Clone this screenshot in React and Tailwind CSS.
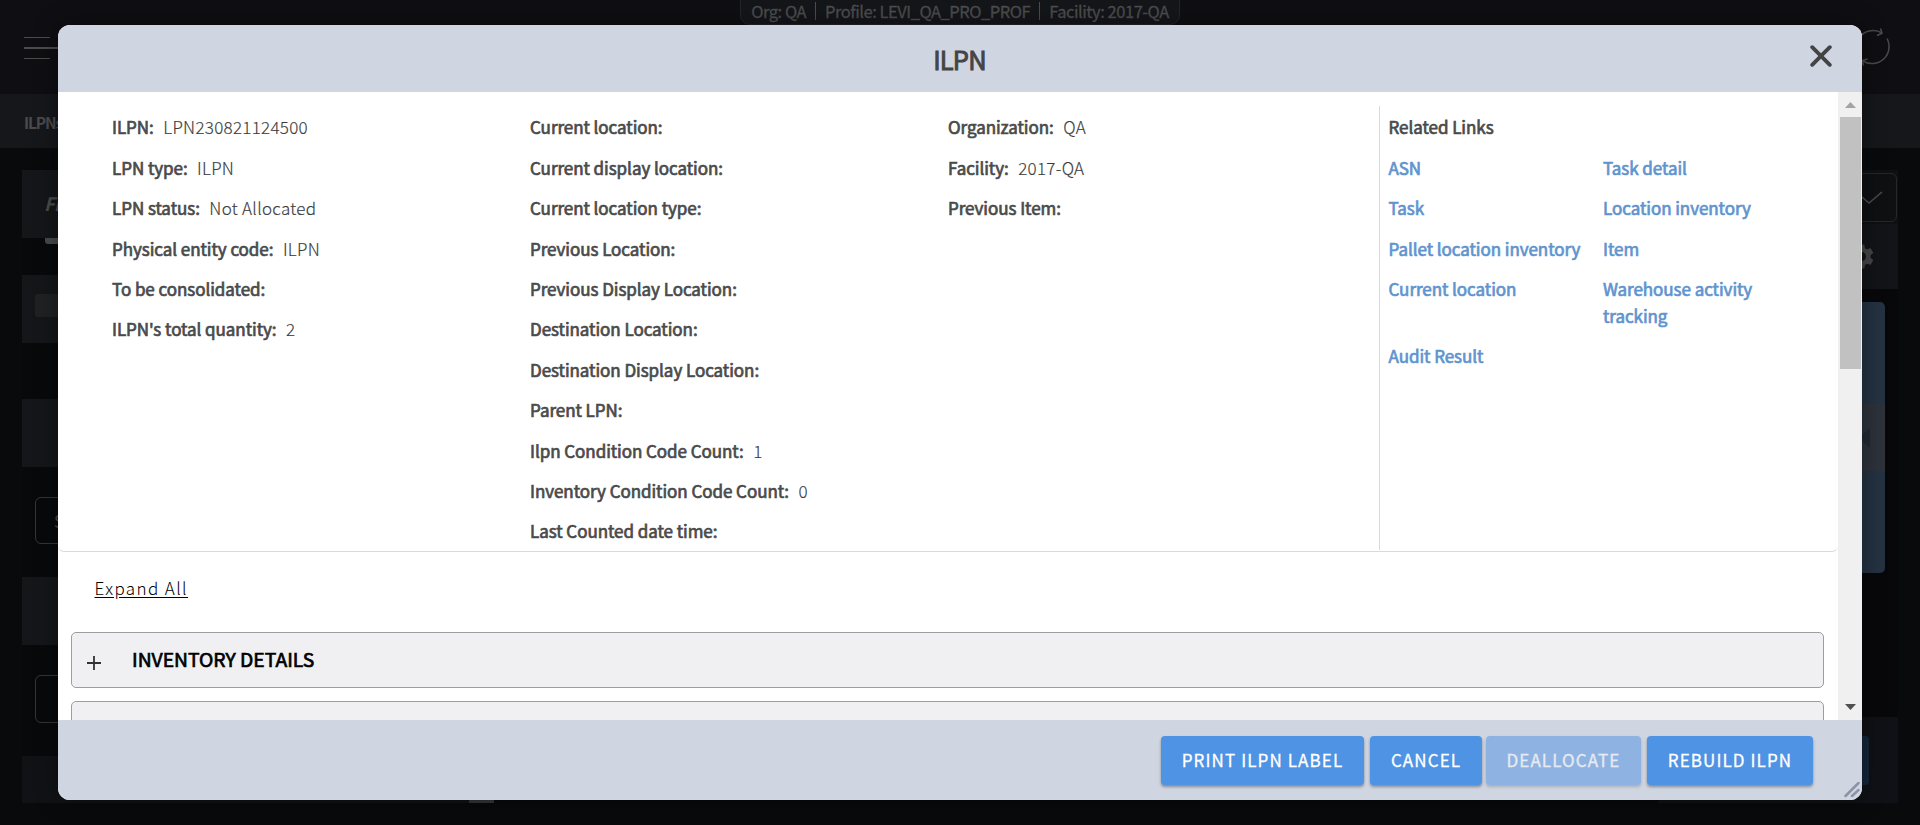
const details = [
  [
    ["ILPN:", "LPN230821124500"],
    ["LPN type:", "ILPN"],
    ["LPN status:", "Not Allocated"],
    ["Physical entity code:", "ILPN"],
    ["To be consolidated:", ""],
    ["ILPN's total quantity:", "2"],
  ],
  [
    ["Current location:", ""],
    ["Current display location:", ""],
    ["Current location type:", ""],
    ["Previous Location:", ""],
    ["Previous Display Location:", ""],
    ["Destination Location:", ""],
    ["Destination Display Location:", ""],
    ["Parent LPN:", ""],
    ["Ilpn Condition Code Count:", "1"],
    ["Inventory Condition Code Count:", "0"],
    ["Last Counted date time:", ""],
  ],
  [
    ["Organization:", "QA"],
    ["Facility:", "2017-QA"],
    ["Previous Item:", ""],
  ],
];

const links = [
  "ASN", "Task detail",
  "Task", "Location inventory",
  "Pallet location inventory", "Item",
  "Current location", "Warehouse activity tracking",
  "Audit Result",
];

const heavy = "[-webkit-text-stroke:0.7px_currentColor]";

function Field({ label, value }) {
  return (
    <div className="mb-[13.4px] flex h-[27px] items-center whitespace-nowrap leading-[27px]">
      <span className={`tracking-[-0.050px] ${heavy}`}>{label}</span>
      {value && <span className="ml-[9.500px] font-light tracking-[0.280px] text-[#3c3c3c] [-webkit-text-stroke:0.150px_currentColor]">{value}</span>}
    </div>
  );
}

function ActionButton({ children, className }) {
  return (
    <button className={`h-[49px] rounded-[4px] bg-[#4f93e4] pb-px text-center text-[17px] tracking-[1.1px] whitespace-nowrap text-white [-webkit-text-stroke:0.3px_currentColor] shadow-[0_2px_3px_rgba(0,0,0,0.35)] ${className}`}>
      {children}
    </button>
  );
}

function Backdrop() {
  return (
    <div className="flex h-full flex-col">
      <header className="flex h-[94px] shrink-0 justify-between bg-[#0f0e12]">
        <div className="w-[240px] pt-[37px] pl-6">
          <div className="h-px w-[26px] bg-[#4b4b4c]" />
          <div className="mt-[9px] h-[2px] w-[40px] bg-[#4b4b4c]" />
          <div className="mt-[9px] h-px w-[26px] bg-[#4b4b4c]" />
        </div>
        <div className="mt-[-6px] flex h-[31px] w-[440px] items-center justify-center rounded-b-[10px] border border-[#25262a] bg-[#15161a] pt-[3px] text-[16.500px] tracking-[-0.470px] whitespace-nowrap text-[#4c4d4e] [-webkit-text-stroke:0.3px_currentColor]">
          <span>Org: QA</span>
          <span className="mx-[9px] h-[18px] w-px bg-[#4c4d4e]" />
          <span>Profile: LEVI_QA_PRO_PROF</span>
          <span className="mx-[9px] h-[18px] w-px bg-[#4c4d4e]" />
          <span>Facility: 2017-QA</span>
        </div>
        <div className="flex w-[240px] justify-end pt-[27px] pr-[26px]">
          <svg width="40" height="40" viewBox="0 0 40 40" fill="none" stroke="#4b4b4c" strokeWidth="1.5">
            <path d="M4.5 12A17 17 0 0 1 28 6" />
            <path d="M26.5 1.5 28 6.3 23 8.5" />
            <path d="M33 11.500A17 17 0 0 1 9 34" />
            <path d="M9.500 38.500 8.500 33.500 13.500 32" />
          </svg>
        </div>
      </header>
      <div className="flex h-[54px] shrink-0 items-center bg-[#16171b] pt-[3px] pl-6 text-[15.500px] font-bold tracking-[-1.150px] text-[#4b4b4c]">ILPNs</div>
      <main className="mx-[22px] mt-[22px] flex h-[633px] shrink-0 justify-between bg-[#08090b]">
        <section className="flex w-[472px] flex-col">
          <div className="flex h-[68px] shrink-0 items-center bg-[#141619] pl-[22px] text-[18.500px] font-bold tracking-[-0.900px] text-[#4b4b4c] italic">Filters</div>
          <div className="ml-[23px] h-[6px] w-[60px] shrink-0 rounded-b-[3px] bg-[#48494a]" />
          <div className="mt-[31px] h-[68px] shrink-0 bg-[#141619] pt-[19px] pl-[13px]">
            <div className="h-[23px] w-[60px] rounded-[3px] bg-[#202123]" />
          </div>
          <div className="mt-[56px] h-[68px] shrink-0 bg-[#141619]" />
          <div className="mt-[30px] ml-[13px] flex h-[47px] w-[200px] shrink-0 items-center rounded-[6px] border border-[#343536] pl-[18px] text-[17px] text-[#4b4b4c]">Search</div>
          <div className="mt-[33px] h-[68px] shrink-0 bg-[#141619]" />
          <div className="mt-[30px] ml-[13px] h-[48px] w-[200px] shrink-0 rounded-[6px] border border-[#343536]" />
          <div className="mt-[33px] flex h-[47px] shrink-0 items-end justify-end bg-[#111215]">
            <div className="h-[5px] w-[25px] bg-[#363637]" />
          </div>
        </section>
        <section className="flex w-[240px] flex-col bg-[#08080a]">
          <div className="h-[54px] shrink-0 bg-[#0f1012] pt-[3px] pr-px">
            <div className="flex h-[49px] items-center justify-end rounded-[6px] border border-[#25272a] pr-[13px]">
              <svg width="30" height="16" viewBox="0 0 30 16" fill="none" stroke="#4b4b4c" strokeWidth="1.500">
                <path d="M3 2l13 11L29 2" />
              </svg>
            </div>
          </div>
          <div className="flex h-[65px] shrink-0 items-center justify-end bg-[#131418] pr-[24px]">
            <svg width="25" height="25" viewBox="2 2 20 20" fill="#454546">
              <path d="M19.140 12.940c.040-.300.060-.610.060-.940s-.020-.640-.070-.940l2.030-1.580a.490.490 0 0 0 .120-.610l-1.920-3.320a.490.490 0 0 0-.590-.220l-2.390.960a7 7 0 0 0-1.620-.940l-.360-2.540A.480.480 0 0 0 13.920 2.400h-3.840a.480.480 0 0 0-.480.410l-.360 2.540a7.400 7.400 0 0 0-1.620.940l-2.390-.960a.490.490 0 0 0-.590.220L2.740 8.870a.480.480 0 0 0 .120.610l2.030 1.580a6 6 0 0 0 0 1.880l-2.030 1.580a.490.490 0 0 0-.120.610l1.920 3.320c.120.220.370.290.590.220l2.390-.960c.500.380 1.030.700 1.620.940l.360 2.540c.050.240.240.410.480.410h3.840c.240 0 .440-.170.470-.410l.360-2.540a7 7 0 0 0 1.620-.940l2.390.960c.220.080.470 0 .590-.220l1.920-3.320a.480.480 0 0 0-.120-.610zM12 15.600A3.600 3.600 0 1 1 12 8.400a3.600 3.600 0 0 1 0 7.200z" />
            </svg>
          </div>
          <div className="mt-[13px] mr-[13px] h-[271px] shrink-0 overflow-hidden rounded-[5px] bg-[#253242] pt-[102px]">
            <div className="flex h-[67px] items-center justify-end bg-[#2d323b] pr-[15px]">
              <svg width="11" height="20" viewBox="0 0 11 20" fill="#222933">
                <path d="M11 0v20L0 10z" />
              </svg>
            </div>
          </div>
          <div className="mt-auto flex h-[86px] items-start justify-end bg-[#101116] pt-[19px] pr-[29px]">
            <div className="h-[49px] w-[150px] rounded-[4px] bg-[#14253a]" />
          </div>
        </section>
      </main>
    </div>
  );
}

function Dialog() {
  return (
    <div className="absolute top-[25px] left-[58px] flex h-[775px] w-[1804px] flex-col overflow-hidden rounded-[12px] bg-white text-[#4a4a4a] shadow-[0_0_24px_rgba(0,0,0,0.4)]">
      <header className="grid h-[67px] shrink-0 grid-cols-3 items-center bg-[#cfd5e1]">
        <h1 className="col-start-2 pt-px pr-px text-center text-[25.5px] leading-[30px] tracking-[-0.800px] text-[#444] [-webkit-text-stroke:0.9px_currentColor]">ILPN</h1>
        <svg className="mr-[30px] mb-[5px] justify-self-end" width="22" height="22" viewBox="0 0 22 22" stroke="#444" strokeWidth="3.800" strokeLinecap="round">
          <path d="M2.200 2.200l17.600 17.600M19.800 2.200L2.200 19.800" />
        </svg>
      </header>

      <div className="flex h-[628px] shrink-0">
        <div className="flex min-w-0 flex-1 flex-col overflow-hidden">
          <div className="flex h-[460px] shrink-0 overflow-hidden rounded-b-[6px] border-b border-[#d9dadc] pt-[14px] pl-[54px] text-[17px]">
            {details.map((column, i) => (
              <div key={i} className="w-[418px] pt-[7.400px]">
                {column.map(([label, value]) => (
                  <Field key={label} label={label} value={value} />
                ))}
              </div>
            ))}
            <div className="ml-[13px] h-[444px] w-[440px] border-l border-[#d9dadc] pt-[7.400px] pl-[8.500px] tracking-[-0.050px]">
              <div className={`mb-[13.400px] leading-[27px] ${heavy}`}>Related Links</div>
              <div className={`grid grid-cols-[214.500px_170px] gap-y-[13.400px] leading-[27px] text-[#5f94cf] ${heavy}`}>
                {links.map((link) => (
                  <a key={link} href="#">{link}</a>
                ))}
              </div>
            </div>
          </div>
          <div className="h-[54px] shrink-0 pt-[22px] pl-[36.500px] leading-[27px]">
            <a href="#" className="text-[17px] font-light tracking-[1.400px] text-black underline underline-offset-2">Expand All</a>
          </div>
          <div className="mt-[26px] mr-[14px] ml-[13px] flex h-[56px] shrink-0 items-center rounded-[5px] border border-[#9c9da0] bg-[#f0f0f3] pl-[15px]">
            <svg className="mt-[5px]" width="14" height="14" viewBox="0 0 14 14" stroke="#333" strokeWidth="1.800">
              <path d="M7 0v14M0 7h14" />
            </svg>
            <span className={`mb-[2px] ml-[31px] text-[19.300px] leading-[28px] text-black ${heavy}`}>INVENTORY DETAILS</span>
          </div>
          <div className="mt-[13px] mr-[14px] ml-[13px] h-[56px] shrink-0 rounded-[5px] border border-[#9c9da0] bg-[#f0f0f3]" />
        </div>
        <div className="flex w-[24px] flex-col bg-[#f0f0f0] pt-[10px] pr-px pb-[10px] pl-[2px]">
          <svg className="self-center" width="11" height="6" viewBox="0 0 11 6" fill="#a3a3a3">
            <path d="M5.500 0L11 6H0z" />
          </svg>
          <div className="mt-[9px] h-[252px] bg-[#c1c1c1]" />
          <svg className="mt-auto self-center" width="11" height="6" viewBox="0 0 11 6" fill="#505050">
            <path d="M5.500 6L11 0H0z" />
          </svg>
        </div>
      </div>

      <footer className="flex h-[80px] justify-end bg-[#cfd5e1] pt-[16px] pr-[49px]">
        <ActionButton className="w-[203px]">PRINT ILPN LABEL</ActionButton>
        <ActionButton className="ml-[6px] w-[112px]">CANCEL</ActionButton>
        <ActionButton className="ml-[4px] w-[155px] opacity-50">DEALLOCATE</ActionButton>
        <ActionButton className="ml-[6px] w-[166px]">REBUILD ILPN</ActionButton>
      </footer>
      <svg className="absolute right-[2px] bottom-[2px]" width="16" height="16" viewBox="0 0 16 16" stroke="#8d95a5" strokeWidth="2.500" strokeLinecap="round">
        <path d="M1.500 14L14.500 1M8 14l6.500-6" />
      </svg>
    </div>
  );
}

export default function App() {
  return (
    <div className="relative h-[825px] w-[1920px] overflow-hidden bg-[#090a0c] font-['Noto_Sans_CJK_SC',sans-serif]">
      <Backdrop />
      <Dialog />
    </div>
  );
}
